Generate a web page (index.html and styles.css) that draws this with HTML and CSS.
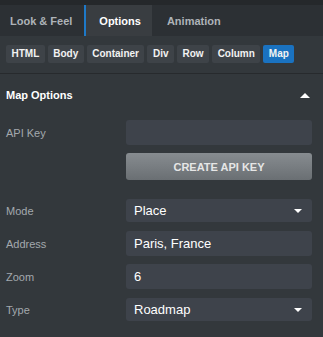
FILE: index.html
```html
<!DOCTYPE html>
<html lang="en">
<head>
  <meta charset="UTF-8" />
  <meta name="viewport" content="width=device-width, initial-scale=1" />
  <title>Map Options</title>
  <link rel="stylesheet" href="styles.css">
</head>
<body>

  <div class="panel">
    <div class="tabs">
      <div class="tab first">Look &amp; Feel</div>
      <div class="tab active">Options</div>
      <div class="tab">Animation</div>
    </div>

    <div class="crumbs">
      <span class="crumb">HTML</span>
      <span class="crumb">Body</span>
      <span class="crumb">Container</span>
      <span class="crumb">Div</span>
      <span class="crumb">Row</span>
      <span class="crumb">Column</span>
      <span class="crumb current">Map</span>
    </div>

    <div class="section">
      <div class="section-head">
        <span>Map Options</span>
        <span class="caret-up"></span>
      </div>

      <div class="field">
        <label class="label">API Key</label>
        <input class="input" type="text" value="">
      </div>
      <div class="field-button">
        <button class="create-btn">CREATE API KEY</button>
      </div>

      <div class="field">
        <label class="label">Mode</label>
        <div class="select"><span>Place</span><span class="caret-down"></span></div>
      </div>
      <div class="field">
        <label class="label">Address</label>
        <input class="input" type="text" value="Paris, France">
      </div>
      <div class="field">
        <label class="label">Zoom</label>
        <input class="input" type="text" value="6">
      </div>
      <div class="field">
        <label class="label">Type</label>
        <div class="select"><span>Roadmap</span><span class="caret-down"></span></div>
      </div>
    </div>
  </div>

</body>
</html>
```

FILE: styles.css
```css
body {
  margin: 0;
  background: #33383c;
  font-family: "Liberation Sans", Arial, sans-serif;
  color: #fff;
}

.panel {
  width: 323px;
}

/* top tabs */
.tabs {
  display: flex;
  height: 31px;
  border-top: 5px solid #25282b;
  background: #2c3034;
}

.tab {
  display: flex;
  align-items: center;
  padding: 0 14px 0 15px;
  font-size: 11px;
  font-weight: bold;
  color: #aeb3b8;
}

.tab.first {
  padding-left: 10px;
  padding-right: 12px;
}

.tab.active {
  background: #393d41;
  border-left: 2px solid #1e79c8;
  padding: 0 11px 0 13px;
  color: #fff;
}

/* element path */
.crumbs {
  display: flex;
  gap: 3px;
  padding: 9px 6px 10px;
  border-bottom: 1px solid #272a2d;
}

.crumb {
  height: 18px;
  line-height: 18px;
  padding: 0 5.5px;
  background: #3e4348;
  border-radius: 2px;
  font-size: 10px;
  font-weight: bold;
  color: #f2f2f2;
}

.crumb.current {
  background: #1a72c0;
}

/* options section */
.section-head {
  display: flex;
  align-items: center;
  justify-content: space-between;
  height: 42px;
  padding: 0 13px 0 6px;
  font-size: 11px;
  font-weight: bold;
}

.caret-up {
  width: 0;
  height: 0;
  border-left: 5px solid transparent;
  border-right: 5px solid transparent;
  border-bottom: 5px solid #fff;
}

.field {
  display: flex;
  align-items: center;
  height: 33px;
  padding: 0 11px 0 6px;
}

.label {
  width: 120px;
  flex-shrink: 0;
  font-size: 11px;
  color: #a3a9ae;
}

.input {
  flex: 1;
  min-width: 0;
  height: 25px;
  box-sizing: border-box;
  padding: 0 8px;
  border: none;
  border-radius: 3px;
  background: #3e434b;
  color: #fff;
  font-family: inherit;
  font-size: 13px;
  outline: none;
}

.select {
  flex: 1;
  display: flex;
  align-items: center;
  justify-content: space-between;
  height: 23px;
  padding: 0 10px 0 8px;
  border-radius: 3px;
  background: #3e434b;
  font-size: 13px;
}

.caret-down {
  width: 0;
  height: 0;
  border-left: 4px solid transparent;
  border-right: 4px solid transparent;
  border-top: 4px solid #fff;
}

.field-button {
  padding: 4px 11px 14px 126px;
}

.create-btn {
  display: block;
  width: 100%;
  height: 27px;
  border: none;
  border-radius: 3px;
  background: linear-gradient(to bottom, #878c90, #6a6f73);
  color: #e6e6e6;
  font-family: inherit;
  font-size: 11px;
  font-weight: bold;
}
```
